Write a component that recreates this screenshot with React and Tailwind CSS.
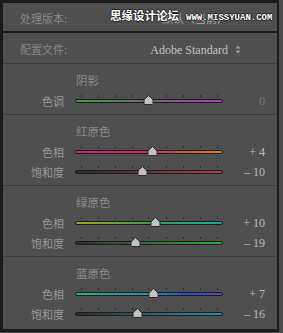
const TICKS = [6, 23, 40, 57, 73, 91, 108, 125, 142];

const SECTIONS = [
  {
    title: "阴影",
    h: "h-[51px]",
    rows: [
      {
        label: "色调",
        grad: "bg-[linear-gradient(to_right,#3e9e3e,#6c6c6c_50%,#b23cc2)]",
        pos: 73,
        value: "0",
        dim: true,
      },
    ],
  },
  {
    title: "红原色",
    h: "h-[71px]",
    rows: [
      {
        label: "色相",
        grad: "bg-[linear-gradient(to_right,#cc2080,#da2c52_50%,#d8822c)]",
        pos: 77,
        value: "+ 4",
      },
      {
        label: "饱和度",
        grad: "bg-[linear-gradient(to_right,#2c2c2c,#603636_45%,#b24242)]",
        pos: 67,
        value: "– 10",
      },
    ],
  },
  {
    title: "绿原色",
    h: "h-[71px]",
    rows: [
      {
        label: "色相",
        grad: "bg-[linear-gradient(to_right,#aaa424,#34a446_50%,#22a4a6)]",
        pos: 80,
        value: "+ 10",
      },
      {
        label: "饱和度",
        grad: "bg-[linear-gradient(to_right,#2c2c2c,#3a6a3a_45%,#34aa34)]",
        pos: 60,
        value: "– 19",
      },
    ],
  },
  {
    title: "蓝原色",
    h: "flex-1",
    rows: [
      {
        label: "色相",
        grad: "bg-[linear-gradient(to_right,#2eb084,#2492b2_50%,#2456c2,#6a40c6)]",
        pos: 78,
        value: "+ 7",
      },
      {
        label: "饱和度",
        grad: "bg-[linear-gradient(to_right,#2c2c2c,#2e5e6a_45%,#2290b6)]",
        pos: 62,
        value: "– 16",
      },
    ],
  },
];

function Slider({ grad, pos }) {
  return (
    <div className="relative w-[148px] h-5">
      {TICKS.map((t) => (
        <div
          key={t}
          className="absolute top-[4px] w-px h-[2px] bg-[#2a2a2a]"
          style={{ left: t }}
        />
      ))}
      <div
        className={`absolute left-0 right-0 top-[8px] h-[4px] rounded-full border border-[#1c1c1c] ${grad}`}
      />
      <svg
        className="absolute top-[4px]"
        style={{ left: pos - 5 }}
        width="11"
        height="10"
        viewBox="0 0 11 10"
      >
        <path
          d="M5.5 0.5 L10 4.8 V8.5 Q10 9.5 9 9.5 H2 Q1 9.5 1 8.5 V4.8 Z"
          fill="#c2c2c2"
          stroke="#2a2a2a"
          strokeWidth="1"
        />
      </svg>
    </div>
  );
}

function SliderRow({ label, grad, pos, value, dim }) {
  return (
    <div className="flex items-center h-5">
      <div className="w-[61px] text-right text-[11px] text-[#999] font-['Noto_Sans_CJK_SC',sans-serif] leading-none">
        {label}
      </div>
      <div className="ml-[11px]">
        <Slider grad={grad} pos={pos} />
      </div>
      <div
        className={`w-[42px] text-right text-[12px] leading-none font-['Liberation_Serif',serif] ${
          dim ? "text-[#777]" : "text-[#bdbdbd]"
        }`}
      >
        {value}
      </div>
    </div>
  );
}

export default function App() {
  return (
    <div className="w-[283px] h-[333px] bg-[#4a4a4a]">
      <div className="relative w-[279px] h-[332px] flex flex-col bg-[#4f4f4f] border-t-[3px] border-l-[3px] border-b-[3px] border-r-2 border-[#1b1b1b]">
        {/* processing version */}
        <div className="h-[30px] flex items-center justify-between pt-[3px] pl-[17px] pr-[36px] border-b-2 border-[#1b1b1b] shrink-0">
          <span className="text-[11px] text-[#888] font-['Noto_Sans_CJK_SC',sans-serif]">
            处理版本:
          </span>
          <span className="flex items-center gap-[6px] text-[11px] text-[#aaa] font-['Noto_Sans_CJK_SC',sans-serif]">
            默认（当前）
            <svg width="7" height="5" viewBox="0 0 7 5">
              <path d="M0.5 0.5 L6.5 0.5 L3.5 4.5 Z" fill="#9a9a9a" />
            </svg>
          </span>
        </div>

        {/* profile */}
        <div className="h-[31px] flex items-center justify-between pt-[3px] pl-[17px] pr-[36px] border-b border-[#3c3c3c] shrink-0">
          <span className="text-[11px] text-[#888] font-['Noto_Sans_CJK_SC',sans-serif]">
            配置文件:
          </span>
          <span className="flex items-center gap-[7px] text-[12px] text-[#c4c4c4] font-['Liberation_Serif',serif]">
            Adobe Standard
            <svg width="6" height="9" viewBox="0 0 6 9">
              <path d="M0.5 3.5 L3 0.5 L5.5 3.5 Z" fill="#a0a0a0" />
              <path d="M0.5 5.5 L3 8.5 L5.5 5.5 Z" fill="#a0a0a0" />
            </svg>
          </span>
        </div>

        {SECTIONS.map((s, i) => (
          <div
            key={s.title}
            className={`${s.h} shrink-0 pt-[9px] ${
              i < SECTIONS.length - 1 ? "border-b border-[#3e3e3e]" : ""
            }`}
          >
            <div className="h-4 flex items-center pl-[73px] text-[11.5px] text-[#8c8c8c] font-['Noto_Sans_CJK_SC',sans-serif]">
              {s.title}
            </div>
            <div className="mt-[2px]">
              {s.rows.map((r) => (
                <SliderRow key={r.label} {...r} />
              ))}
            </div>
          </div>
        ))}

        {/* watermark */}
        <div className="absolute left-[107px] top-[4px] text-[11.5px] font-bold text-white font-['Noto_Sans_CJK_SC',sans-serif] [text-shadow:1px_0_0_#222,-1px_0_0_#222,0_1px_0_#222,0_-1px_0_#222]">
          思缘设计论坛
        </div>
        <div className="absolute left-[183px] top-[9px] text-[9px] font-bold text-white font-['Liberation_Mono',monospace] [text-shadow:1px_0_0_#222,-1px_0_0_#222,0_1px_0_#222,0_-1px_0_#222]">
          WWW.MISSYUAN.COM
        </div>
      </div>
    </div>
  );
}
